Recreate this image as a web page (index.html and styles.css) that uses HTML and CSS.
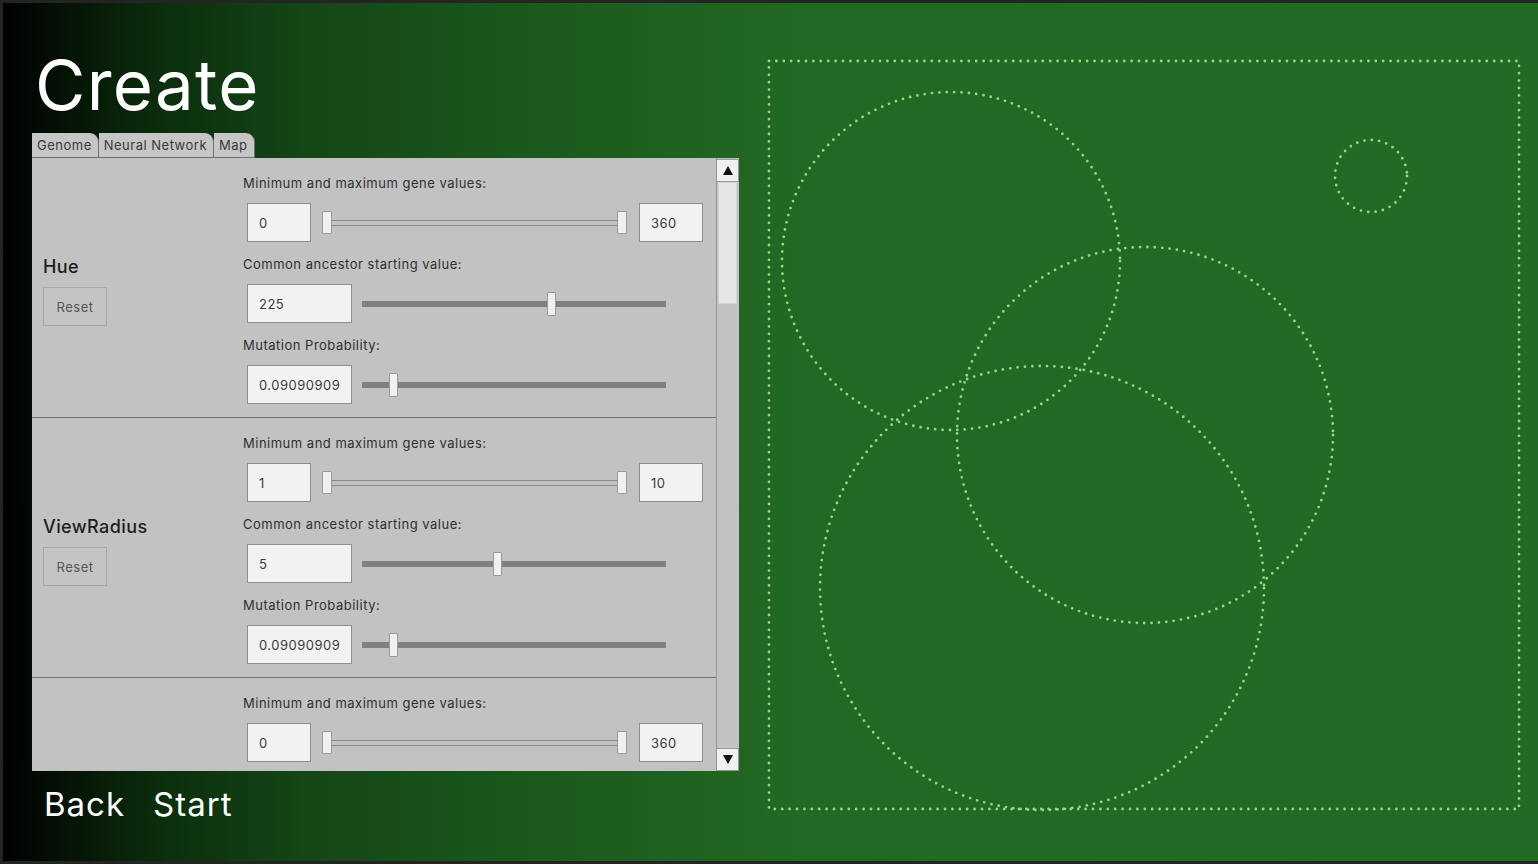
FILE: index.html
```html
<!DOCTYPE html>
<html>
<head>
<meta charset="utf-8">
<link rel="stylesheet" href="styles.css">
</head>
<body>
<div class="screen">
  <div class="left">
    <h1 class="title">Create</h1>
    <div class="panel">
      <div class="tabs">
        <div class="tab">Genome</div>
        <div class="tab">Neural Network</div>
        <div class="tab">Map</div>
      </div>
      <div class="pbody">
        <div class="scroll">
          <section class="gene">
            <div class="gene-side">
              <div class="gene-name">Hue</div>
              <button class="reset">Reset</button>
            </div>
            <div class="gene-main">
              <div class="field-label">Minimum and maximum gene values:</div>
              <div class="field-row">
                <div class="num">0</div>
                <div class="range2"><div class="track"></div><div class="thumb" style="left:0px"></div><div class="thumb" style="left:295px"></div></div>
                <div class="num">360</div>
              </div>
              <div class="field-label">Common ancestor starting value:</div>
              <div class="field-row">
                <div class="num wide">225</div>
                <div class="range"><div class="bar"></div><div class="thumb" style="left:185px"></div></div>
              </div>
              <div class="field-label">Mutation Probability:</div>
              <div class="field-row">
                <div class="num wide">0.09090909</div>
                <div class="range"><div class="bar"></div><div class="thumb" style="left:27px"></div></div>
              </div>
            </div>
          </section>
          <section class="gene">
            <div class="gene-side">
              <div class="gene-name">ViewRadius</div>
              <button class="reset">Reset</button>
            </div>
            <div class="gene-main">
              <div class="field-label">Minimum and maximum gene values:</div>
              <div class="field-row">
                <div class="num">1</div>
                <div class="range2"><div class="track"></div><div class="thumb" style="left:0px"></div><div class="thumb" style="left:295px"></div></div>
                <div class="num">10</div>
              </div>
              <div class="field-label">Common ancestor starting value:</div>
              <div class="field-row">
                <div class="num wide">5</div>
                <div class="range"><div class="bar"></div><div class="thumb" style="left:131px"></div></div>
              </div>
              <div class="field-label">Mutation Probability:</div>
              <div class="field-row">
                <div class="num wide">0.09090909</div>
                <div class="range"><div class="bar"></div><div class="thumb" style="left:27px"></div></div>
              </div>
            </div>
          </section>
          <section class="gene">
            <div class="gene-side"></div>
            <div class="gene-main">
              <div class="field-label">Minimum and maximum gene values:</div>
              <div class="field-row">
                <div class="num">0</div>
                <div class="range2"><div class="track"></div><div class="thumb" style="left:0px"></div><div class="thumb" style="left:295px"></div></div>
                <div class="num">360</div>
              </div>
            </div>
          </section>
        </div>
        <div class="sbar">
          <div class="sb-btn"><svg width="10" height="9" viewBox="0 0 10 9"><polygon points="5,0 10,9 0,9" fill="#111"/></svg></div>
          <div class="sb-track"><div class="sb-thumb"></div></div>
          <div class="sb-btn"><svg width="10" height="9" viewBox="0 0 10 9"><polygon points="0,0 10,0 5,9" fill="#111"/></svg></div>
        </div>
      </div>
    </div>
    <div class="nav"><span>Back</span><span>Start</span></div>
  </div>
  <svg class="canvas" width="799" height="858" viewBox="739 3 799 858">
    <g class="dots">
      <rect x="769" y="61" width="750" height="748"/>
      <circle cx="951" cy="261" r="169"/>
      <circle cx="1145" cy="435" r="188"/>
      <circle cx="1042" cy="588" r="222"/>
      <circle cx="1371" cy="176" r="36"/>
    </g>
  </svg>
</div>
</body>
</html>
```
FILE: styles.css
```css
body {
  margin: 0;
  width: 1538px;
  height: 864px;
  overflow: hidden;
  background: #242424;
  font-family: Inter, "Noto Sans", sans-serif;
}
.screen {
  display: flex;
  margin: 3px 0 0 3px;
  width: 1535px;
  height: 858px;
  background: linear-gradient(90deg, #000 0px, #0b2c0c 150px, #144616 300px, #1a571b 500px, #1f621f 680px, #226a23 800px, #236b24 1535px);
}
.left {
  flex: none;
  width: 707px;
  margin-left: 29px;
  display: flex;
  flex-direction: column;
}
.title {
  margin: 0 0 0 3px;
  padding-top: 48px;
  height: 82px;
  font-size: 69px;
  line-height: 69px;
  font-weight: 400;
  letter-spacing: 1.3px;
  color: #fff;
}
.panel {
  height: 638px;
  display: flex;
  flex-direction: column;
}
.tabs {
  display: flex;
  height: 25px;
}
.tab {
  height: 25px;
  box-sizing: border-box;
  padding: 0 6px 0 5px;
  background: #c6c6c6;
  border-right: 1px solid #6f6f6f;
  border-bottom: 1px solid #6f6f6f;
  border-top-right-radius: 9px;
  font-size: 13px;
  line-height: 24px;
  letter-spacing: 0.5px;
  color: #3a3a3a;
}
.pbody {
  flex: 1;
  min-height: 0;
  display: flex;
  background: #c2c2c2;
}
.scroll {
  flex: 1;
  overflow: hidden;
}
.gene {
  display: flex;
  height: 260px;
  box-sizing: border-box;
  border-bottom: 1px solid #717171;
}
.gene-side {
  flex: none;
  width: 211px;
  box-sizing: border-box;
  padding: 98px 0 0 11px;
}
.gene-name {
  font-size: 18px;
  font-weight: 500;
  line-height: 22px;
  letter-spacing: 0.4px;
  color: #1e1e1e;
  margin-bottom: 9px;
}
.reset {
  display: flex;
  align-items: center;
  justify-content: center;
  width: 64px;
  height: 39px;
  padding: 0;
  box-sizing: border-box;
  border: 1px solid #a8a8a8;
  background: #c4c4c4;
  font-family: Inter, "Noto Sans", sans-serif;
  font-size: 13px;
  letter-spacing: 0.5px;
  color: #555;
}
.gene-main {
  flex: 1;
  padding-top: 15px;
}
.field-label {
  font-size: 13px;
  line-height: 20px;
  letter-spacing: 0.5px;
  color: #303030;
}
.field-row {
  display: flex;
  align-items: center;
  height: 39px;
  margin: 10px 0 12px 4px;
}
.num {
  flex: none;
  width: 64px;
  height: 39px;
  box-sizing: border-box;
  border: 1px solid #8e8e8e;
  background: #f2f2f2;
  padding-left: 11px;
  font-size: 13px;
  line-height: 38px;
  letter-spacing: 0.5px;
  color: #3c3c3c;
}
.num.wide {
  width: 105px;
}
.range2 {
  position: relative;
  flex: none;
  width: 305px;
  height: 23px;
  margin: 0 12px 0 11px;
}
.range2 .track {
  position: absolute;
  left: 0;
  right: 0;
  top: 9px;
  height: 6px;
  box-sizing: border-box;
  border-top: 1px solid #8a8a8a;
  border-bottom: 1px solid #8a8a8a;
}
.thumb {
  position: absolute;
  top: 0;
  width: 10px;
  height: 23px;
  box-sizing: border-box;
  background: #f0f0f0;
  border: 1px solid #9a9a9a;
  border-radius: 1px;
}
.range {
  position: relative;
  flex: none;
  width: 304px;
  height: 24px;
  margin-left: 10px;
}
.range .bar {
  position: absolute;
  left: 0;
  right: 0;
  top: 9px;
  height: 6px;
  background: #808080;
}
.range .thumb {
  width: 9px;
  height: 24px;
}
.sbar {
  flex: none;
  width: 23px;
  display: flex;
  flex-direction: column;
  box-sizing: border-box;
  border-left: 1px solid #969696;
  padding-top: 1px;
}
.sb-btn {
  height: 23px;
  box-sizing: border-box;
  border: 1px solid #9a9a9a;
  border-left: none;
  background: #f0f0f0;
  display: flex;
  align-items: center;
  justify-content: center;
}
.sb-track {
  flex: 1;
  padding: 0 2px 0 1px;
}
.sb-thumb {
  height: 120px;
  background: #e5e5e5;
  border: 1px solid #d4d4d4;
}
.nav {
  display: flex;
  gap: 28px;
  margin-top: 13px;
  padding-left: 12px;
  font-size: 33px;
  line-height: 40px;
  letter-spacing: 1px;
  color: #fff;
}
.canvas {
  flex: none;
  display: block;
}
.dots rect,
.dots circle {
  fill: none;
  stroke: #9ad580;
  stroke-width: 2.8;
  stroke-linecap: round;
  stroke-dasharray: 0 7.4;
}
```
